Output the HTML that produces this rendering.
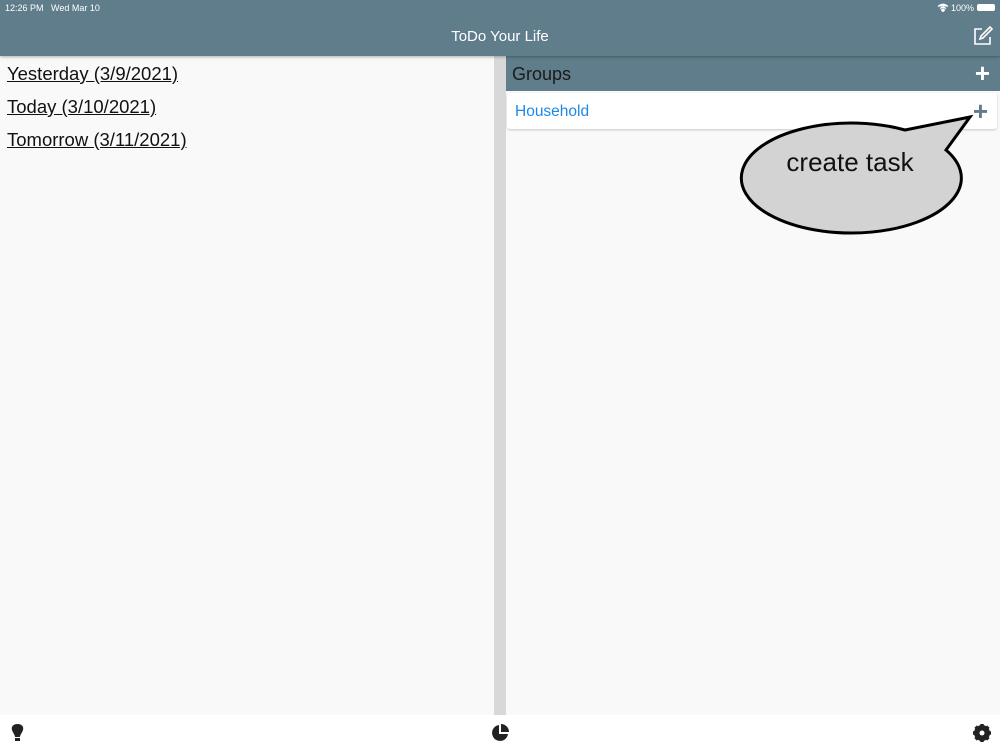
<!DOCTYPE html>
<html><head><meta charset="utf-8"><style>
*{margin:0;padding:0;box-sizing:border-box}
body{width:1000px;height:750px;overflow:hidden;font-family:"Liberation Sans",sans-serif;background:#f9f9f9;position:relative}
.hdr{position:absolute;left:0;top:0;width:1000px;height:56px;background:#607d8b;box-shadow:0 1px 3px rgba(0,0,0,.3);z-index:2}
.st{position:absolute;top:3px;font-size:9px;color:#fff}
.title{position:absolute;top:28px;width:100%;text-align:center;font-size:15px;color:#fff}
.left a{position:absolute;left:7px;font-size:18.5px;color:#111;text-decoration:underline}
.div{position:absolute;left:494px;top:56px;width:12px;height:659px;background:#d8d8d8}
.groups{position:absolute;left:506px;top:56px;width:494px;height:35px;background:#607d8b;color:#1a1a1a;font-size:18px;padding:8px 0 0 6px}
.card{position:absolute;left:507px;top:93px;width:490px;height:36px;background:#fff;border-radius:3px;box-shadow:0 1px 2px rgba(0,0,0,.2);color:#1e88e5;font-size:15.5px;padding:10px 0 0 8px}
.bot{position:absolute;left:0;top:715px;width:1000px;height:35px;background:#fff}
</style></head><body>
<div class="hdr">
<div class="st" style="left:5px">12:26 PM&nbsp;&nbsp;&nbsp;Wed Mar 10</div>
<div class="st" style="left:951px">100%</div>
<svg style="position:absolute;left:937px;top:3px" width="12" height="9" viewBox="0 0 12 9"><path d="M1 3.5Q6-1 11 3.5M3 5.5Q6 3 9 5.5M6 8.5L4.5 7Q6 6 7.5 7Z" stroke="#fff" stroke-width="1.3" fill="#fff"/></svg>
<div style="position:absolute;left:977px;top:4px;width:18px;height:7px;border:1px solid #fff;border-radius:2px;background:#fff"></div>
<div class="title" style="top:28px">ToDo Your Life</div>
<svg style="position:absolute;left:973px;top:26px" width="20" height="20" viewBox="0 0 20 20" fill="none" stroke="#fff" stroke-width="1.6"><path d="M9 3H2v15h15v-7"/><path d="M17 1l2 2-9 9-3 1 1-3z"/></svg>
</div>
<div class="left">
<a style="top:63px">Yesterday (3/9/2021)</a>
<a style="top:96px">Today (3/10/2021)</a>
<a style="top:129px">Tomorrow (3/11/2021)</a>
</div>
<div class="div"></div>
<div class="groups">Groups<span style="position:absolute;right:10px;top:2px;color:#fff;font-size:26px;font-weight:bold">+</span></div>
<div class="card">Household<span style="position:absolute;right:9px;top:3px;color:#607d8b;font-size:26px;font-weight:bold">+</span></div>
<svg style="position:absolute;left:0;top:0" width="1000" height="750">
<path d="M905 130 L970 117 L946 150 A110 55 0 1 1 905 130 Z" fill="#d3d3d3" stroke="#000" stroke-width="3" stroke-linejoin="miter"/>
<text x="850" y="171" font-family="Liberation Sans" font-size="26" text-anchor="middle" fill="#111">create task</text>
</svg>
<div class="bot">
<svg style="position:absolute;left:11px;top:9px" width="13" height="18" viewBox="0 0 13 18"><path d="M6.5 0C2 0 0 3 1 6c1 3 3 5 3 7h5c0-2 2-4 3-7 1-3-1-6-5.5-6z" fill="#222"/><rect x="4" y="14" width="5" height="3" fill="#222"/></svg>
<svg style="position:absolute;left:491px;top:9px" width="18" height="18" viewBox="0 0 18 18"><path d="M8 1A8 8 0 1 0 17 10H8Z" fill="#222"/><path d="M10 0A8 8 0 0 1 18 8H10Z" fill="#222"/></svg>
<svg style="position:absolute;left:973px;top:9px" width="18" height="18" viewBox="0 0 18 18"><circle cx="9" cy="9" r="6" fill="none" stroke="#222" stroke-width="4"/><g stroke="#222" stroke-width="3.5"><path d="M9 0v18M0 9h18M2.6 2.6l12.8 12.8M15.4 2.6L2.6 15.4"/></g><circle cx="9" cy="9" r="2.5" fill="#fff"/></svg>
</div>
</body></html>
